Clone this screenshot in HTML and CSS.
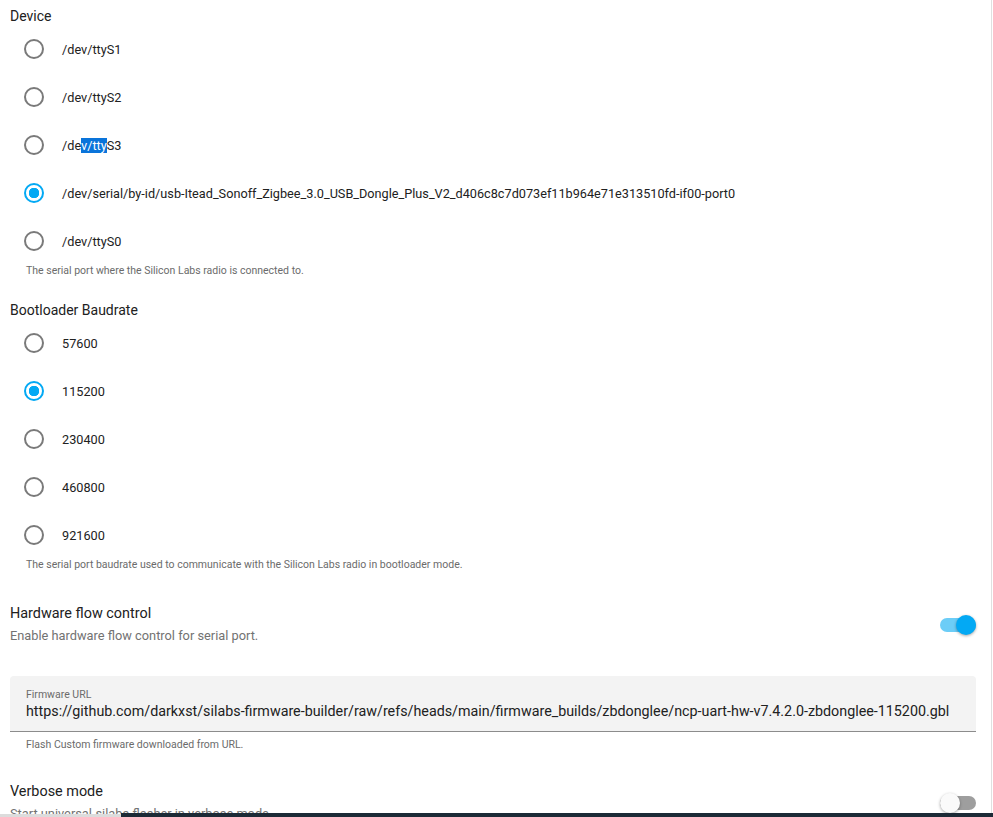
FILE: index.html
```html
<!DOCTYPE html>
<html>
<head>
<meta charset="utf-8">
<link rel="stylesheet" href="styles.css">
</head>
<body>
<div class="page">
  <section class="group">
    <div class="group-title">Device</div>
    <div class="radio-row"><span class="radio"></span><span class="radio-label">/dev/ttyS1</span></div>
    <div class="radio-row"><span class="radio"></span><span class="radio-label">/dev/ttyS2</span></div>
    <div class="radio-row"><span class="radio"></span><span class="radio-label">/de<span class="sel">v/tty</span>S3</span></div>
    <div class="radio-row"><span class="radio checked"></span><span class="radio-label">/dev/serial/by-id/usb-Itead_Sonoff_Zigbee_3.0_USB_Dongle_Plus_V2_d406c8c7d073ef11b964e71e313510fd-if00-port0</span></div>
    <div class="radio-row"><span class="radio"></span><span class="radio-label">/dev/ttyS0</span></div>
    <div class="helper">The serial port where the Silicon Labs radio is connected to.</div>
  </section>

  <section class="group">
    <div class="group-title">Bootloader Baudrate</div>
    <div class="radio-row"><span class="radio"></span><span class="radio-label">57600</span></div>
    <div class="radio-row"><span class="radio checked"></span><span class="radio-label">115200</span></div>
    <div class="radio-row"><span class="radio"></span><span class="radio-label">230400</span></div>
    <div class="radio-row"><span class="radio"></span><span class="radio-label">460800</span></div>
    <div class="radio-row"><span class="radio"></span><span class="radio-label">921600</span></div>
    <div class="helper">The serial port baudrate used to communicate with the Silicon Labs radio in bootloader mode.</div>
  </section>

  <div class="setting-row hw">
    <div class="setting-text">
      <div class="setting-title">Hardware flow control</div>
      <div class="setting-desc">Enable hardware flow control for serial port.</div>
    </div>
    <span class="switch on"><span class="track"></span><span class="thumb"></span></span>
  </div>

  <div class="field">
    <div class="field-label">Firmware URL</div>
    <div class="field-value">https://github.com/darkxst/silabs-firmware-builder/raw/refs/heads/main/firmware_builds/zbdonglee/ncp-uart-hw-v7.4.2.0-zbdonglee-115200.gbl</div>
  </div>
  <div class="helper field-helper">Flash Custom firmware downloaded from URL.</div>

  <div class="setting-row verbose">
    <div class="setting-text">
      <div class="setting-title">Verbose mode</div>
      <div class="setting-desc">Start universal-silabs-flasher in verbose mode.</div>
    </div>
    <span class="switch off"><span class="track"></span><span class="thumb"></span></span>
  </div>
</div>
<div class="bottom-bar"><span class="bar-left"></span><span class="bar-right"></span></div>
</body>
</html>
```

FILE: styles.css
```css
html, body {
  margin: 0;
  padding: 0;
  background: #ffffff;
  overflow: hidden;
}
body {
  font-family: Roboto, "Liberation Sans", sans-serif;
  color: #212121;
  height: 817px;
}
.page {
  width: 966px;
  padding: 7px 15px 0 10px;
  border-right: 1px solid #e0e0e0;
  height: 810px;
  overflow: hidden;
}
.group {
  margin-bottom: 22px;
}
.group-title {
  font-size: 14px;
  line-height: 18px;
  color: #212121;
}
.radio-row {
  display: flex;
  align-items: center;
  height: 48px;
  padding-left: 4px;
}
.radio {
  width: 40px;
  height: 40px;
  display: flex;
  align-items: center;
  justify-content: center;
  flex: none;
}
.radio::before {
  content: "";
  box-sizing: border-box;
  width: 20px;
  height: 20px;
  border: 2px solid #7a7a7a;
  border-radius: 50%;
}
.radio.checked::before {
  border-color: #03a9f4;
  background: radial-gradient(circle, #03a9f4 0 5px, #ffffff 5.5px);
}
.radio-label {
  margin-left: 8px;
  font-size: 12.7px;
  color: #212121;
  white-space: nowrap;
}
.sel {
  background: #0a74da;
  color: #ffffff;
}
.helper {
  padding-left: 16px;
  margin-top: -2px;
  font-size: 10.5px;
  line-height: 16px;
  color: #6b6b6b;
}
.setting-row {
  display: flex;
  align-items: center;
  justify-content: space-between;
}
.setting-row.hw {
  margin-top: 30px;
}
.setting-title {
  font-size: 14.4px;
  line-height: 22px;
  color: #212121;
}
.setting-desc {
  font-size: 12.8px;
  line-height: 21px;
  color: #727272;
}
.switch {
  position: relative;
  width: 36px;
  height: 20px;
  flex: none;
}
.switch .track {
  position: absolute;
  left: 0;
  top: 3px;
  width: 36px;
  height: 14px;
  border-radius: 7px;
}
.switch .thumb {
  position: absolute;
  top: 0;
  width: 20px;
  height: 20px;
  border-radius: 50%;
  box-shadow: 0 1px 3px rgba(0,0,0,0.35);
}
.switch.on .track { background: #6ccdf7; }
.switch.on .thumb { right: 0; background: #03a9f4; }
.switch.off .track { background: #9e9e9e; }
.switch.off .thumb { left: 0; background: #fafafa; }
.field {
  margin-top: 30px;
  height: 55px;
  background: #f3f3f3;
  border-radius: 4px 4px 0 0;
  border-bottom: 1px solid #8c8c8c;
  padding-left: 16px;
  box-sizing: content-box;
}
.field-label {
  padding-top: 13px;
  font-size: 10.5px;
  line-height: 12px;
  color: #6b6b6b;
}
.field-value {
  font-size: 14.3px;
  line-height: 20px;
  color: #212121;
  white-space: nowrap;
}
.field-helper {
  margin-top: 5px;
}
.verbose {
  margin-top: 28px;
}
.bottom-bar {
  position: fixed;
  left: 0;
  right: 0;
  bottom: 0;
  height: 4px;
  display: flex;
}
.bar-left {
  width: 121px;
  background: #dcdcdc;
  margin-top: 1px;
}
.bar-right {
  flex: 1;
  background: #1c2a36;
}
```
